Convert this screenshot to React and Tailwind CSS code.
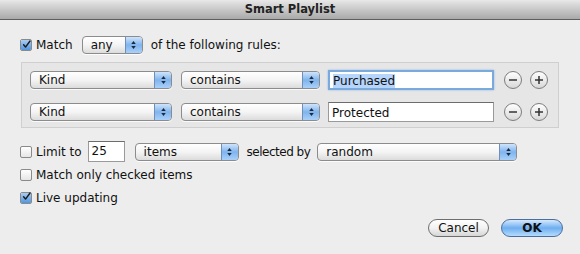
import React from 'react'

const font = { fontFamily: '"DejaVu Sans", "Liberation Sans", sans-serif' }

function Check({ checked }) {
  return (
    <span className="w-[12px] h-[12px] border border-[#8a8a8a] rounded-[2px] bg-gradient-to-b from-white to-[#e6e6e6] flex items-center justify-center shrink-0 relative">
      {checked && (
        <>
          <span className="absolute inset-0 rounded-[1px] bg-gradient-to-b from-[#a9cdf3] to-[#4f95e0]" />
          <svg viewBox="0 0 14 14" className="w-[13px] h-[13px] relative -mt-[2px] ml-[1px]">
            <path d="M2.5 7.5 L5.5 11 L12.5 1.5" fill="none" stroke="#1a1a1a" strokeWidth="2.2" strokeLinecap="round" strokeLinejoin="round" />
          </svg>
        </>
      )}
    </span>
  )
}

function Select({ label, className }) {
  return (
    <div className={`h-[18px] flex items-stretch rounded-[4px] border border-[#8c8c8c] bg-gradient-to-b from-white via-[#f4f4f4] to-[#dcdcdc] shadow-[0_1px_0_rgba(255,255,255,0.8)] overflow-hidden ${className}`}>
      <span className="flex-1 pl-[8px] text-[12px] leading-[16px] text-[#111]">{label}</span>
      <span className="w-[17px] border-l border-[#6f8fb8] bg-gradient-to-b from-[#cfe4fb] via-[#7fb4ee] to-[#a9d0fa] flex flex-col items-center justify-center gap-[2px]">
        <svg viewBox="0 0 6 4" className="w-[5px] h-[3px]"><path d="M0 4 L3 0 L6 4 Z" fill="#1b2a3c" /></svg>
        <svg viewBox="0 0 6 4" className="w-[5px] h-[3px]"><path d="M0 0 L3 4 L6 0 Z" fill="#1b2a3c" /></svg>
      </span>
    </div>
  )
}

function RoundBtn({ sign }) {
  return (
    <span className="w-[18px] h-[18px] rounded-full border border-[#7d7d7d] bg-gradient-to-b from-white to-[#d8d8d8] flex items-center justify-center">
      <svg viewBox="0 0 10 10" className="w-[10px] h-[10px]">
        <path d={sign === '+' ? 'M1 5 H9 M5 1 V9' : 'M1 5 H9'} stroke="#333" strokeWidth="1.5" fill="none" />
      </svg>
    </span>
  )
}

function Rule({ value, focused }) {
  return (
    <div className="flex items-center h-[20px]">
      <Select label="Kind" className="w-[142px]" />
      <Select label="contains" className="w-[139px] ml-[9px]" />
      <div className={`ml-[8px] w-[166px] h-[20px] bg-white text-[12px] leading-[18px] pl-[3px] text-[#111] ${focused ? 'border-2 border-[#7aa9dc] shadow-[0_0_2px_#8fb8e6]' : 'border border-[#9a9a9a] border-t-[#6c6c6c] pt-[1px]'}`}>
        {focused ? <span className="bg-[#b5d5fb]">{value}</span> : value}
      </div>
      <div className="ml-[10px] flex gap-[8px]">
        <RoundBtn sign="-" />
        <RoundBtn sign="+" />
      </div>
    </div>
  )
}

export default function App() {
  return (
    <div className="w-[580px] h-[254px] bg-[#ededed] flex flex-col overflow-hidden" style={font}>
      <div className="h-[20px] bg-gradient-to-b from-[#e8e8e8] to-[#a9a9a9] border-b border-[#5e5e5e] flex items-center justify-center">
        <span className="text-[11.5px] font-bold text-[#222]">Smart Playlist</span>
      </div>

      <div className="flex items-center mt-[16px] ml-[20px] h-[18px]">
        <Check checked />
        <span className="ml-[4px] text-[12px] text-[#111]">Match</span>
        <Select label="any" className="w-[61px] ml-[9px]" />
        <span className="ml-[8px] text-[12px] text-[#111]">of the following rules:</span>
      </div>

      <div className="mt-[8px] ml-[21px] w-[538px] h-[66px] border border-[#cfcfcf] bg-[#e6e6e6] flex flex-col pl-[8px] pt-[7px] gap-[12px]">
        <Rule value="Purchased" focused />
        <Rule value="Protected" />
      </div>

      <div className="flex items-center mt-[13px] ml-[20px] h-[21px]">
        <Check />
        <span className="ml-[4px] text-[12px] text-[#111]">Limit to</span>
        <div className="ml-[6px] w-[37px] h-[21px] bg-white border border-[#9a9a9a] border-t-[#6c6c6c] text-[12px] leading-[19px] pl-[3px] text-[#111]">25</div>
        <Select label="items" className="w-[104px] ml-[10px]" />
        <span className="ml-[8px] text-[12px] tracking-[-0.5px] text-[#111]">selected by</span>
        <Select label="random" className="w-[200px] ml-[7px]" />
      </div>

      <div className="flex items-center mt-[4px] ml-[20px] h-[17px]">
        <Check />
        <span className="ml-[4px] text-[12px] text-[#111]">Match only checked items</span>
      </div>

      <div className="flex items-center mt-[6px] ml-[20px] h-[17px]">
        <Check checked />
        <span className="ml-[4px] text-[12px] text-[#111]">Live updating</span>
      </div>

      <div className="flex justify-end mt-[13px] mr-[17px] gap-[12px]">
        <button className="w-[61px] h-[18px] rounded-full border border-[#6e6e6e] bg-gradient-to-b from-white via-[#f2f2f2] to-[#d6d6d6] text-[12px] leading-[16px] text-[#111]">Cancel</button>
        <button className="w-[62px] h-[18px] rounded-full border border-[#4a6f9e] bg-gradient-to-b from-[#d6e9fd] via-[#6eaef0] to-[#b5dcfd] text-[12px] leading-[16px] font-bold text-[#111]">OK</button>
      </div>
    </div>
  )
}
